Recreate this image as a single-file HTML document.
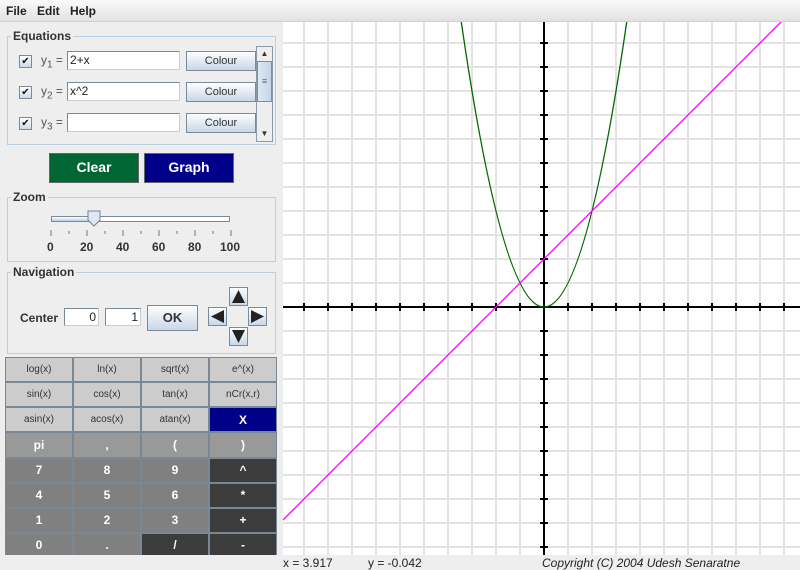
<!DOCTYPE html>
<html><head><meta charset="utf-8"><style>
*{box-sizing:border-box;margin:0;padding:0}
body{width:800px;height:570px;overflow:hidden;background:#eeeeee;font-family:"Liberation Sans",sans-serif;font-size:12px;color:#333;position:relative}
.a{position:absolute}
.menu{left:0;top:0;width:800px;height:22px;background:linear-gradient(#fafafa,#e2e2e2);border-bottom:1px solid #d0d0d0}
.menu span{position:absolute;top:4px;font-size:12px;font-weight:bold;color:#222}
.fs{border:1px solid #b8cfe5}
.lg{background:#eeeeee;padding:0 2px;font-weight:bold;font-size:12px;color:#333}
.cb{width:13px;height:13px;border:1px solid #7a8a99;background:linear-gradient(#fff,#cfdbe8);font-size:10px;line-height:11px;text-align:center;color:#111}
.tf{background:#fff;border:1px solid #7a8a99;border-right-color:#ccc;border-bottom-color:#ccc;font-size:12px;padding-left:2px;line-height:17px;color:#222}
.btn{border:1px solid #7a8a99;background:linear-gradient(#fdfeff,#c8d7e6);text-align:center;font-size:11px;color:#333}
.big{color:#fff;font-weight:bold;font-size:14px;text-align:center;line-height:27px;border:1px solid #666}
.kp{left:5px;top:357px;width:272px;height:201px;background:#7a8795;display:grid;grid-template-columns:repeat(4,1fr);grid-template-rows:repeat(8,1fr);gap:2px;padding:1px}
.kp div{display:flex;align-items:center;justify-content:center;font-size:10px}
.l{background:#cccccc;color:#333}
.m{background:#999999;color:#fff;font-weight:bold;font-size:12px!important}
.n{background:#808080;color:#fff;font-weight:bold;font-size:12px!important}
.d{background:#3c3c3c;color:#fff;font-weight:bold;font-size:12px!important}
.ar{width:19px;height:19px;border:1px solid #7a8a99;background:linear-gradient(#fdfeff,#c8d7e6)}
</style></head><body>
<div class="a menu"><span style="left:6px">File</span><span style="left:37px">Edit</span><span style="left:70px">Help</span></div>

<div class="a fs" style="left:7px;top:36px;width:269px;height:109px"></div>
<div class="a lg" style="left:11px;top:29px">Equations</div>

<div class="a cb" style="left:19px;top:55px">✔</div>
<div class="a" style="left:41px;top:53px;color:#555">y<sub style="font-size:10px">1</sub> =</div>
<div class="a tf" style="left:67px;top:51px;width:113px;height:19px">2+x</div>
<div class="a btn" style="left:186px;top:51px;width:70px;height:20px;line-height:18px">Colour</div>

<div class="a cb" style="left:19px;top:86px">✔</div>
<div class="a" style="left:41px;top:84px;color:#555">y<sub style="font-size:10px">2</sub> =</div>
<div class="a tf" style="left:67px;top:82px;width:113px;height:19px">x^2</div>
<div class="a btn" style="left:186px;top:82px;width:70px;height:20px;line-height:18px">Colour</div>

<div class="a cb" style="left:19px;top:117px">✔</div>
<div class="a" style="left:41px;top:115px;color:#555">y<sub style="font-size:10px">3</sub> =</div>
<div class="a tf" style="left:67px;top:113px;width:113px;height:19px"></div>
<div class="a btn" style="left:186px;top:113px;width:70px;height:20px;line-height:18px">Colour</div>

<div class="a" style="left:256px;top:46px;width:17px;height:96px;border:1px solid #8a9aa9;background:#eeeeee"></div>
<div class="a" style="left:257px;top:47px;width:15px;height:14px;background:#eee;font-size:8px;text-align:center;line-height:14px">▲</div>
<div class="a" style="left:257px;top:61px;width:15px;height:41px;border:1px solid #7a8ea9;background:linear-gradient(90deg,#dde8f3,#c4d5e8);font-size:9px;text-align:center;line-height:38px;color:#667">≡</div>
<div class="a" style="left:257px;top:127px;width:15px;height:14px;font-size:8px;text-align:center;line-height:14px">▼</div>

<div class="a big" style="left:49px;top:153px;width:90px;height:30px;background:#006633">Clear</div>
<div class="a big" style="left:144px;top:153px;width:90px;height:30px;background:#000088">Graph</div>

<div class="a fs" style="left:7px;top:197px;width:269px;height:65px"></div>
<div class="a lg" style="left:11px;top:190px">Zoom</div>
<div class="a" style="left:51px;top:216px;width:179px;height:6px;border:1px solid #7a8a99;background:#fff"></div>
<div class="a" style="left:51px;top:216px;width:40px;height:6px;border:1px solid #7a8a99;background:linear-gradient(#fff,#b8cde2)"></div>
<svg class="a" style="left:87px;top:210px" width="15" height="18"><path d="M1 1H13V10L7 16L1 10Z" fill="#dfe8f2" stroke="#6f8499"/></svg>
<svg class="a" style="left:45px;top:228px" width="200" height="10"><g stroke="#777"><path d="M6 2V8M24 3V6M42 2V8M60 3V6M78 2V8M96 3V6M114 2V8M132 3V6M150 2V8M168 3V6M186 2V8"/></g></svg>
<div class="a" style="left:47px;top:240px;font-weight:bold;font-size:12px;color:#333;width:200px">
<span class="a" style="left:0">0</span><span class="a" style="left:33px">20</span><span class="a" style="left:69px">40</span><span class="a" style="left:105px">60</span><span class="a" style="left:141px">80</span><span class="a" style="left:173px">100</span></div>

<div class="a fs" style="left:7px;top:272px;width:269px;height:82px"></div>
<div class="a lg" style="left:11px;top:265px">Navigation</div>
<div class="a" style="left:20px;top:311px;font-weight:bold;color:#333">Center</div>
<div class="a tf" style="left:64px;top:308px;width:35px;height:18px;text-align:right;padding-right:2px;line-height:16px">0</div>
<div class="a tf" style="left:105px;top:308px;width:36px;height:18px;text-align:right;padding-right:2px;line-height:16px">1</div>
<div class="a btn" style="left:147px;top:305px;width:51px;height:26px;line-height:24px;font-weight:bold;font-size:13px">OK</div>
<div class="a ar" style="left:229px;top:287px"><svg width="17" height="17"><path d="M8.5 2L15 15H2Z" fill="#222"/></svg></div>
<div class="a ar" style="left:208px;top:307px"><svg width="17" height="17"><path d="M2 8.5L15 2V15Z" fill="#222"/></svg></div>
<div class="a ar" style="left:248px;top:307px"><svg width="17" height="17"><path d="M15 8.5L2 2V15Z" fill="#222"/></svg></div>
<div class="a ar" style="left:229px;top:327px"><svg width="17" height="17"><path d="M8.5 15L15 2H2Z" fill="#222"/></svg></div>

<div class="a kp">
<div class="l">log(x)</div><div class="l">ln(x)</div><div class="l">sqrt(x)</div><div class="l">e^(x)</div>
<div class="l">sin(x)</div><div class="l">cos(x)</div><div class="l">tan(x)</div><div class="l">nCr(x,r)</div>
<div class="l">asin(x)</div><div class="l">acos(x)</div><div class="l">atan(x)</div><div style="background:#000088;color:#fff;font-weight:bold;font-size:12px">X</div>
<div class="m">pi</div><div class="m">,</div><div class="m">(</div><div class="m">)</div>
<div class="n">7</div><div class="n">8</div><div class="n">9</div><div class="d">^</div>
<div class="n">4</div><div class="n">5</div><div class="n">6</div><div class="d">*</div>
<div class="n">1</div><div class="n">2</div><div class="n">3</div><div class="d">+</div>
<div class="n">0</div><div class="n">.</div><div class="d">/</div><div class="d">-</div>
</div>

<svg class="a" style="left:283px;top:22px;background:#fff" width="517" height="533">
<path stroke="#e3e3e3" stroke-width="2" fill="none" d="M21 0V533M45 0V533M69 0V533M93 0V533M117 0V533M141 0V533M165 0V533M189 0V533M213 0V533M237 0V533M285 0V533M309 0V533M333 0V533M357 0V533M381 0V533M405 0V533M429 0V533M453 0V533M477 0V533M501 0V533M0 21H517M0 45H517M0 69H517M0 93H517M0 117H517M0 141H517M0 165H517M0 189H517M0 213H517M0 237H517M0 261H517M0 309H517M0 333H517M0 357H517M0 381H517M0 405H517M0 429H517M0 453H517M0 477H517M0 501H517M0 525H517M0 549H517"/>
<path stroke="#000" stroke-width="2" fill="none" d="M261 0V533M0 285H517"/>
<path stroke="#000" stroke-width="2" fill="none" d="M21 281V289M45 281V289M69 281V289M93 281V289M117 281V289M141 281V289M165 281V289M189 281V289M213 281V289M237 281V289M285 281V289M309 281V289M333 281V289M357 281V289M381 281V289M405 281V289M429 281V289M453 281V289M477 281V289M501 281V289M257 21H265M257 45H265M257 69H265M257 93H265M257 117H265M257 141H265M257 165H265M257 189H265M257 213H265M257 237H265M257 261H265M257 309H265M257 333H265M257 357H265M257 381H265M257 405H265M257 429H265M257 453H265M257 477H265M257 501H265M257 525H265"/>
<path stroke="#006600" stroke-width="1.3" fill="none" d="M177 -9Q261 579 345 -9"/>
<path stroke="#ff00ff" stroke-width="1.3" fill="none" d="M0 498L517 -19"/>
</svg>
<div class="a" style="left:0;top:555px;width:800px;height:15px;background:#eeeeee"></div>
<div class="a" style="left:283px;top:556px;font-size:12px;color:#222">x = 3.917</div>
<div class="a" style="left:368px;top:556px;font-size:12px;color:#222">y = -0.042</div>
<div class="a" style="left:542px;top:556px;font-size:12px;color:#222;font-style:italic">Copyright (C) 2004 Udesh Senaratne</div>
</body></html>
